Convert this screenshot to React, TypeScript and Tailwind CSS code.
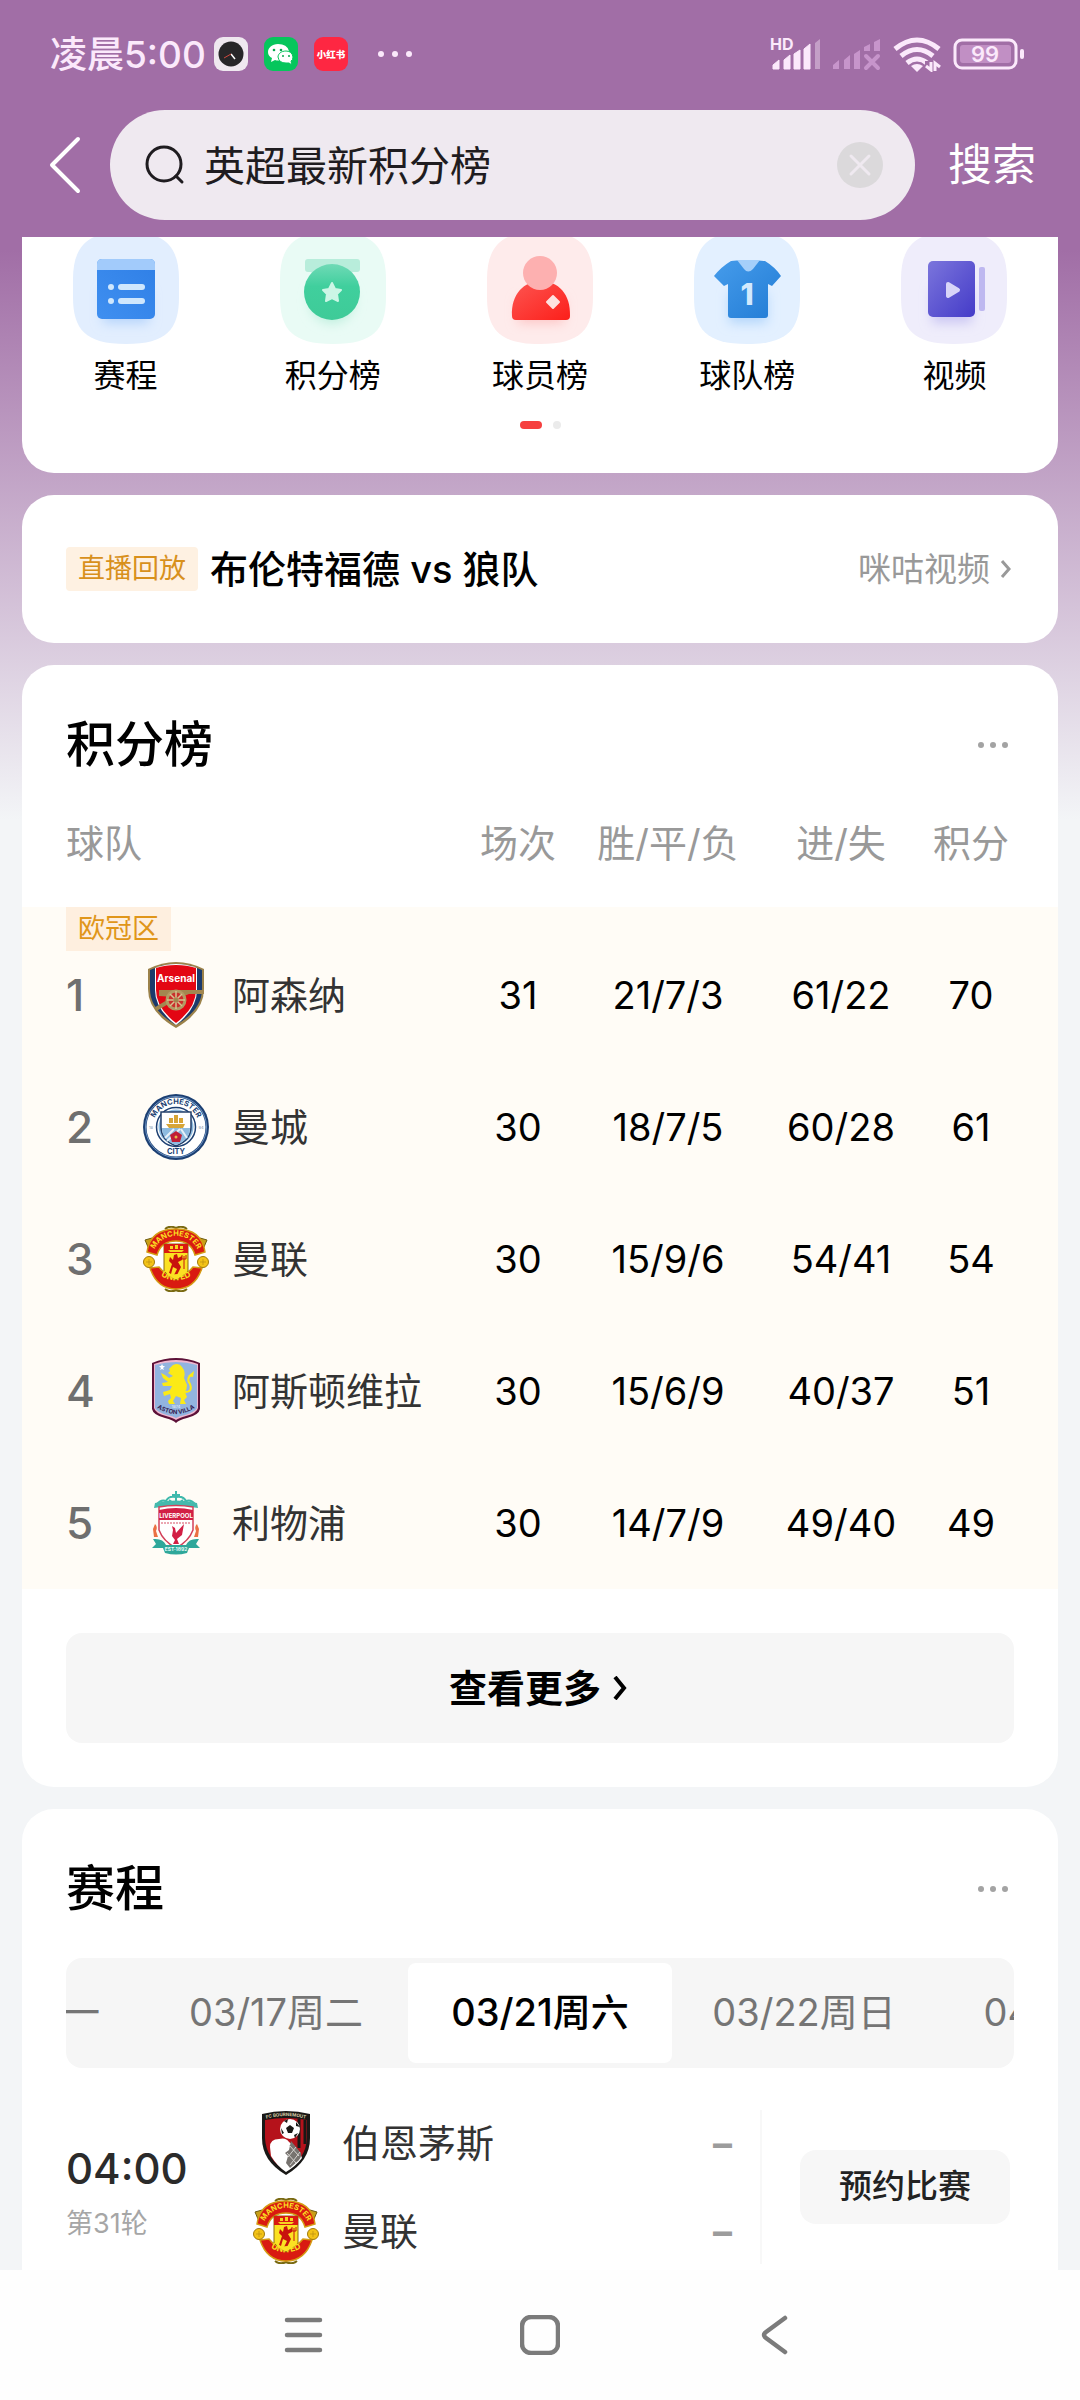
import type { ReactNode } from "react";

type CrestId = "arsenal" | "mancity" | "manutd" | "villa" | "liverpool" | "bournemouth";

interface Standing {
  rank: number;
  crest: CrestId;
  name: string;
  played: number;
  record: string;
  goals: string;
  points: number;
}

const STANDINGS: Standing[] = [
  { rank: 1, crest: "arsenal", name: "阿森纳", played: 31, record: "21/7/3", goals: "61/22", points: 70 },
  { rank: 2, crest: "mancity", name: "曼城", played: 30, record: "18/7/5", goals: "60/28", points: 61 },
  { rank: 3, crest: "manutd", name: "曼联", played: 30, record: "15/9/6", goals: "54/41", points: 54 },
  { rank: 4, crest: "villa", name: "阿斯顿维拉", played: 30, record: "15/6/9", goals: "40/37", points: 51 },
  { rank: 5, crest: "liverpool", name: "利物浦", played: 30, record: "14/7/9", goals: "49/40", points: 49 },
];

const DATES = ["03/16周一", "03/17周二", "03/21周六", "03/22周日", "04/11周六"];
const ACTIVE_DATE = "03/21周六";

const MATCH_TEAMS: { crest: CrestId; name: string }[] = [
  { crest: "bournemouth", name: "伯恩茅斯" },
  { crest: "manutd", name: "曼联" },
];

function ArsenalCrest() {
  return (
    <>
      <path d="M5 7Q19 0 33 0T61 7V27Q61 50 33 66Q5 50 5 27Z" fill="#9c824a" />
      <path d="M7 8Q20 2 33 2T59 8V27Q59 48 33 63Q7 48 7 27Z" fill="#1b3a6b" />
      <path d="M12 6Q22 2 33 2T54 6V28Q54 47 33 63Q12 47 12 28Z" fill="#fff" />
      <path d="M13 6Q22 3 33 3T53 6V28Q53 46 33 61Q13 46 13 28Z" fill="#e30613" />
      <text x="33" y="20" textAnchor="middle" fontSize="10" fontWeight="700" fill="#fff">
        Arsenal
      </text>
      <path d="M16 28H61V32H46Q40 35 32 35L16 34Z" fill="#a38750" />
      <path d="M28 38L13 47" stroke="#a38750" strokeWidth="4" />
      <circle cx="33" cy="38" r="9" fill="#c9302c" stroke="#b39a63" strokeWidth="3" />
      <path d="M33 29V47M24 38H42M27 32L39 44M39 32L27 44" stroke="#d5c390" strokeWidth="1.5" />
      <circle cx="33" cy="38" r="2.5" fill="#a38750" />
    </>
  );
}

function ManCityCrest() {
  return (
    <>
      <defs>
        <path id="city-top" d="M10 33A23 23 0 0 1 56 33" />
      </defs>
      <circle cx="33" cy="33" r="33" fill="#1c3f72" />
      <circle cx="33" cy="33" r="30.5" fill="none" stroke="#6c93c4" strokeWidth="1" />
      <circle cx="33" cy="33" r="29.5" fill="#fff" />
      <circle cx="33" cy="33" r="19.5" fill="#fff" stroke="#1c3f72" strokeWidth="1.5" />
      <circle cx="33" cy="33" r="17.5" fill="#8dbbe0" />
      <path d="M18 18H48V33Q48 46 33 52Q18 46 18 33Z" fill="#fff" stroke="#24406b" strokeWidth="1.5" />
      <path d="M19 34H47Q47 46 33 51Q19 46 19 34Z" fill="#8dbbe0" />
      <path d="M22 44L31 35M24 47L37 35M44 44L38 35" stroke="#e7f1f8" strokeWidth="2" />
      <path d="M23 30H42L40 34H26ZM26 29V24H30V29ZM31 29V21H35V29ZM36 29V24H40V29Z" fill="#d7a536" />
      <path d="M33 37L39 41L37 48H29L27 41Z" fill="#c01f36" />
      <circle cx="33" cy="43" r="1.5" fill="#e8b84a" />
      <text fontSize="7.5" fontWeight="700" fill="#1c3f72">
        <textPath href="#city-top" startOffset="50%" textAnchor="middle">MANCHESTER</textPath>
      </text>
      <text x="33" y="60" textAnchor="middle" fontSize="7.5" fontWeight="700" fill="#1c3f72">CITY</text>
      <text x="8" y="35" textAnchor="middle" fontSize="4" fill="#7a8ea9">18</text>
      <text x="58" y="35" textAnchor="middle" fontSize="4" fill="#7a8ea9">94</text>
    </>
  );
}

function ManUtdCrest({ id }: { id: string }) {
  return (
    <>
      <defs>
        <path id={`${id}-top`} d="M10 27A24 24 0 0 1 56 27" />
        <path id={`${id}-low`} d="M10 43A29 29 0 0 0 56 43" />
      </defs>
      <path d="M22 3Q27 -1 33 2Q39 -1 44 3M22 63Q27 67 33 64Q39 67 44 63" fill="none" stroke="#7a6a12" strokeWidth="2" />
      <path d="M2 14L9 12L14 20L5 21ZM64 14L57 12L52 20L61 21Z" fill="#c7a019" stroke="#6d5b10" />
      <circle cx="33" cy="33" r="27" fill="#fff" />
      <path d="M4 26Q7 3 33 3T62 26L52 29Q48 15 33 15T14 29Z" fill="#d91a11" stroke="#d59a12" strokeWidth="1.5" />
      <path d="M7 42L16 41Q23 50 33 50T50 41L59 42Q52 63 33 63T7 42Z" fill="#d91a11" stroke="#d59a12" strokeWidth="1.5" />
      <circle cx="6" cy="36" r="5.5" fill="#f3c316" stroke="#a17a0d" />
      <circle cx="60" cy="36" r="5.5" fill="#f3c316" stroke="#a17a0d" />
      <path d="M3 36H9M6 33V39M57 36H63M60 33V39" stroke="#b98d12" strokeWidth=".7" />
      <path d="M21 18H45V45Q40 51 33 54Q26 51 21 45Z" fill="#fbe122" stroke="#8c6a10" />
      <path d="M21 18H45V27H21Z" fill="#d91a11" />
      <path d="M25 24H41L39 26H27ZM27 23V20H30V23ZM32 23V19H35V23ZM37 23V20H40V23Z" fill="#f8d320" />
      <path
        d="M31 29L34 28L35 32L39 30V34L35 36L38 41L34 49H31L34 43L30 41L28 48L26 47L29 38L26 35L27 31L30 34Z"
        fill="#c8130d"
      />
      <path d="M41 30V43M39 29V33H43V29" fill="none" stroke="#c8130d" />
      <text fontSize="7.5" fontWeight="700" fill="#fbe122">
        <textPath href={`#${id}-top`} startOffset="50%" textAnchor="middle">MANCHESTER</textPath>
      </text>
      <text fontSize="8.5" fontWeight="700" fill="#fbe122">
        <textPath href={`#${id}-low`} startOffset="50%" textAnchor="middle">UNITED</textPath>
      </text>
    </>
  );
}

function VillaCrest() {
  return (
    <>
      <path d="M9 5Q21 0 33 0T57 5V51Q56 57 44 60Q36 62 33 65Q30 62 22 60Q10 57 9 51Z" fill="#5d1138" />
      <path d="M11 6Q22 2 33 2T55 6V50Q54 55 43 58Q36 60 33 62Q30 60 23 58Q12 55 11 50Z" fill="#efb7cf" />
      <path d="M12 7Q22 4 33 4T54 7V50Q52 54 42 57Q36 58 33 60Q30 58 24 57Q14 54 12 50Z" fill="#92b4df" />
      <path d="M19 6L20 8L22 8L20 10L21 12L19 11L17 12L18 10L16 8L18 8Z" fill="#fff" />
      <path
        d="M30 7Q36 4 39 9Q43 14 41 20L44 27Q44 31 42 34L44 39L41 42L43 46H37L38 40L33 38L30 43L32 46H26L25 43L28 40L27 36L21 38L20 34L27 32L29 28L20 28L19 25L25 24L20 20L18 15L22 17L26 20L30 18L25 15L27 13L26 11Z"
        fill="#fbea16"
      />
      <path d="M42 34Q50 34 47 26Q43 21 48 17" fill="none" stroke="#fbea16" strokeWidth="2" />
      <path d="M45 18L51 13L50 19Z" fill="#fbea16" />
      <path id="villa-arc" d="M14 50Q33 62 52 50" fill="none" />
      <text fontSize="6" fontWeight="700" fill="#35204f">
        <textPath href="#villa-arc" startOffset="50%" textAnchor="middle">ASTON VILLA</textPath>
      </text>
      <text x="33" y="50" textAnchor="middle" fontSize="4" fill="#e8f1fb">1874</text>
    </>
  );
}

function LiverpoolCrest() {
  return (
    <>
      <path
        d="M33 1V13M29 5H37M22 14Q24 5 33 7Q42 5 44 14M14 14Q20 7 27 14M52 14Q46 7 39 14M26 10L33 15L40 10"
        fill="none"
        stroke="#3fb9ac"
        strokeWidth="2"
      />
      <path d="M12 13Q33 8 54 13L55 18Q33 14 11 18Z" fill="#45b9ad" />
      <path d="M16 17Q33 14 50 17V40Q46 51 33 58Q20 51 16 40Z" fill="#fff" stroke="#d3405a" strokeWidth="1.5" />
      <path d="M16 20Q33 16 50 20V30H16Z" fill="#d21f45" />
      <text x="33" y="28" textAnchor="middle" fontSize="6" fontWeight="700" fill="#fff">LIVERPOOL</text>
      <path d="M18 33H48" stroke="#e58a99" strokeWidth="1.5" strokeDasharray="2 1" />
      <path d="M29 36L32 38L33 43L41 34L39 45L34 49L36 54H30L32 50L29 46L30 40Z" fill="#d21f45" />
      <path d="M12 34Q15 37 13 41L15 47H11L10 39ZM54 34Q51 37 53 41L51 47H55L56 39Z" fill="#ea7043" />
      <path d="M10 49Q20 48 23 55H43Q46 48 56 49L53 54L57 58H46L44 63Q33 66 22 63L20 58H9L13 54Z" fill="#2fa79a" />
      <text x="33" y="61" textAnchor="middle" fontSize="5" fontWeight="700" fill="#e8fffb">EST·1892</text>
    </>
  );
}

function BournemouthCrest() {
  return (
    <>
      <path d="M9 4Q33 -2 57 4V28Q57 51 33 65Q9 51 9 28Z" fill="#191816" />
      <path d="M12 10Q33 6 54 10V28Q53 49 33 61Q13 49 12 28Z" fill="#b5121b" />
      <path d="M46 9V38M52 10V34" stroke="#191816" strokeWidth="3" />
      <path d="M17 37Q17 29 26 29Q33 27 36 32L41 36L47 43L49 48Q43 56 33 62Q24 56 18 46Z" fill="#fff" />
      <path d="M38 31L48 43Q49 47 45 51L37 58L33 53L35 46L32 43L36 40Z" fill="#77736f" />
      <path d="M36 35L46 46M34 43L43 53M47 42L37 55M43 37L35 47" stroke="#d6d3cf" strokeWidth="1" />
      <circle cx="37" cy="19" r="10" fill="#fff" />
      <path d="M37 15L41 18L39 23H35L33 18ZM31 11L35 9L34 13ZM43 12L47 17L43 16ZM45 23L42 28L41 25ZM28 18L31 23L29 24Z" fill="#191816" />
      <path id="cherries-arc" d="M12 9Q33 3 54 9" fill="none" />
      <text fontSize="4.5" fontWeight="700" fill="#d8cda8">
        <textPath href="#cherries-arc" startOffset="50%" textAnchor="middle">AFC BOURNEMOUTH</textPath>
      </text>
    </>
  );
}

function Crest({ id, scope }: { id: CrestId; scope: string }) {
  return (
    <svg viewBox="0 0 66 66" className="size-[66px] shrink-0" aria-hidden="true">
      {id === "arsenal" && <ArsenalCrest />}
      {id === "mancity" && <ManCityCrest />}
      {id === "manutd" && <ManUtdCrest id={scope} />}
      {id === "villa" && <VillaCrest />}
      {id === "liverpool" && <LiverpoolCrest />}
      {id === "bournemouth" && <BournemouthCrest />}
    </svg>
  );
}

function Tile({ fill, children }: { fill: string; children: ReactNode }) {
  return (
    <svg viewBox="0 0 108 107" className="h-[107px] w-[108px]" aria-hidden="true">
      <path
        d="M22 0H86C100 6 107 20 107 42V60C107 92 95 107 54 107C13 107 1 92 1 60V42C1 20 8 6 22 0Z"
        fill={fill}
      />
      {children}
    </svg>
  );
}

const SHORTCUTS: { label: string; icon: ReactNode }[] = [
  {
    label: "赛程",
    icon: (
      <Tile fill="#e2eefe">
        <defs>
          <linearGradient id="sc-blue" x1="0" y1="1" x2="1" y2="0">
            <stop offset="0" stopColor="#3f8ff0" />
            <stop offset="1" stopColor="#2f7fe6" />
          </linearGradient>
          <filter id="sc-soft" x="-50%" y="-50%" width="200%" height="200%">
            <feGaussianBlur stdDeviation="6" />
          </filter>
        </defs>
        <rect x="31" y="54" width="46" height="32" fill="#b4d3fb" filter="url(#sc-soft)" />
        <rect x="25" y="22" width="58" height="60" rx="5" fill="url(#sc-blue)" />
        <path d="M25 33V27Q25 22 30 22H78Q83 22 83 27V33Z" fill="#a2cbfb" />
        <g fill="#cfe7fd">
          <circle cx="39" cy="50" r="3" />
          <rect x="46" y="47" width="27" height="6" rx="3" />
          <circle cx="39" cy="64" r="3" />
          <rect x="46" y="61" width="27" height="6" rx="3" />
        </g>
      </Tile>
    ),
  },
  {
    label: "积分榜",
    icon: (
      <Tile fill="#e9fbf5">
        <defs>
          <linearGradient id="sc-green" x1="0" y1="0" x2="0" y2="1">
            <stop offset="0" stopColor="#6fdab6" />
            <stop offset=".4" stopColor="#40cf9d" />
            <stop offset="1" stopColor="#3ecb98" />
          </linearGradient>
        </defs>
        <circle cx="53" cy="64" r="22" fill="#bceedc" filter="url(#sc-soft)" />
        <rect x="26" y="22" width="55" height="13" rx="3" fill="#b8eddb" />
        <circle cx="53" cy="55" r="28" fill="url(#sc-green)" />
        <path
          d="M53 46L56 52L62 53L58 57L59 64L53 61L47 64L48 57L44 53L50 52Z"
          fill="#ccf6e6"
          stroke="#ccf6e6"
          strokeWidth="2"
          strokeLinejoin="round"
        />
      </Tile>
    ),
  },
  {
    label: "球员榜",
    icon: (
      <Tile fill="#feebeb">
        <defs>
          <linearGradient id="sc-red" x1="0" y1="0" x2="1" y2="1">
            <stop offset="0" stopColor="#fd5652" />
            <stop offset="1" stopColor="#fc1f1a" />
          </linearGradient>
        </defs>
        <rect x="32" y="62" width="46" height="24" fill="#fdc4c4" filter="url(#sc-soft)" />
        <path d="M26 79C25 57 38 44 55 44S85 57 84 79Q84 83 80 83H30Q26 83 26 79Z" fill="url(#sc-red)" />
        <circle cx="54" cy="36" r="17" fill="#fdb0b0" />
        <path d="M67 59L73 65L67 71L61 65Z" fill="#fee2e0" stroke="#fee2e0" strokeWidth="2" strokeLinejoin="round" />
      </Tile>
    ),
  },
  {
    label: "球队榜",
    icon: (
      <Tile fill="#e3f0ff">
        <defs>
          <linearGradient id="sc-shirt" x1="0" y1="0" x2="1" y2="1">
            <stop offset="0" stopColor="#469ceb" />
            <stop offset="1" stopColor="#227cd5" />
          </linearGradient>
        </defs>
        <rect x="36" y="56" width="38" height="30" fill="#b2d6fb" filter="url(#sc-soft)" />
        <path
          d="M38 24Q54 22 72 24Q82 30 88 39L79 49L75 47V78Q75 81 72 81H38Q35 81 35 78V47L31 49L21 39Q28 30 38 24Z"
          fill="url(#sc-shirt)"
        />
        <path d="M44 23H67L60 32Q55 37 51 32Z" fill="#a5cffa" />
        <text x="54" y="68" textAnchor="middle" fontSize="30" fontWeight="800" fill="#d3e9fd">1</text>
      </Tile>
    ),
  },
  {
    label: "视频",
    icon: (
      <Tile fill="#efedfb">
        <defs>
          <linearGradient id="sc-purple" x1="0" y1="0" x2="1" y2="1">
            <stop offset="0" stopColor="#7b75dc" />
            <stop offset="1" stopColor="#443bc8" />
          </linearGradient>
        </defs>
        <rect x="32" y="52" width="40" height="34" fill="#cac6f3" filter="url(#sc-soft)" />
        <rect x="28" y="24" width="47" height="56" rx="5" fill="url(#sc-purple)" />
        <rect x="79" y="30" width="6" height="44" rx="2" fill="#beb8f0" />
        <path d="M48 47L58 53L48 59Z" fill="#d8d5f8" stroke="#d8d5f8" strokeWidth="4" strokeLinejoin="round" />
      </Tile>
    ),
  },
];

function StatusBar() {
  return (
    <div className="flex h-27 items-center justify-between pr-14 pl-[50px] text-[#fbe9fb]">
      <div className="flex items-center">
        <span className="mr-2 text-[37px] leading-none font-medium">凌晨5:00</span>
        <svg viewBox="0 0 200 34" className="h-[34px] w-[200px]" aria-hidden="true">
          <rect width="34" height="34" rx="9" fill="#efe8ef" />
          <circle cx="17" cy="17" r="12.5" fill="#272628" />
          <path d="M17 17L21 22" stroke="#fff" strokeWidth="1.5" />
          <path d="M17 17L10 21" stroke="#d0493f" strokeWidth="1" />
          <rect x="50" width="34" height="34" rx="9" fill="#06c65c" />
          <path d="M64 7C58 7 54 11 54 15Q54 19 58 21L57 25L61 23Q64 24 67 23Q66 15 75 14Q73 7 64 7Z" fill="#fff" />
          <path d="M72 14C67 14 64 17 64 20Q65 26 72 26L75 26L78 28L77 24Q79 23 79 20Q78 14 72 14Z" fill="#fff" stroke="#06c65c" strokeWidth="1" />
          <g fill="#06a84e">
            <circle cx="60" cy="13" r="1.3" />
            <circle cx="67" cy="13" r="1.3" />
            <circle cx="69" cy="19" r="1" />
            <circle cx="75" cy="19" r="1" />
          </g>
          <rect x="100" width="34" height="34" rx="9" fill="#fe2742" />
          <text x="117" y="21" textAnchor="middle" fontSize="9.5" fontWeight="800" fill="#fff">小红书</text>
          <g fill="#fbe9fb">
            <circle cx="167" cy="17" r="3" />
            <circle cx="181" cy="17" r="3" />
            <circle cx="195" cy="17" r="3" />
          </g>
        </svg>
      </div>
      <svg viewBox="0 0 254 36" className="h-9 w-[254px]" aria-hidden="true">
        <text x="0" y="14" fontSize="16" fontWeight="700" fill="currentColor">HD</text>
        <g fill="currentColor">
          <path d="M3 33V29L9 24V33ZM14 33V24L20 19V33ZM24 33V18L30 14V33ZM34 33V13L40 8V33Z" stroke="currentColor" strokeLinejoin="round" />
          <path d="M45 33V7L50 3V33Z" opacity=".4" />
        </g>
        <g fill="#c795cb">
          <path d="M63 33V29L69 24V33ZM74 33V24L80 19V33ZM84 33V18L90 14V33Z" />
          <path d="M94 15V11L100 8V15ZM104 15V6L110 3V15Z" />
          <path d="M96 20L108 32M108 20L96 32" stroke="#c795cb" strokeWidth="4" strokeLinecap="round" />
        </g>
        <g fill="none" stroke="currentColor" strokeWidth="5">
          <path d="M125 13Q147 -5 169 13" />
          <path d="M131 20Q147 7 163 20" />
          <path d="M137 27Q147 19 157 27" />
        </g>
        <path d="M141 30Q147 26 153 30L147 36Z" fill="currentColor" />
        <path d="M155 25H172V36H155Z" fill="#a16ea6" />
        <path d="M161 26V34L156 30M165 35V27L170 31" fill="none" stroke="currentColor" strokeWidth="3" />
        <rect x="185" y="4" width="61" height="28" rx="7" fill="none" stroke="currentColor" strokeWidth="3" />
        <rect x="190" y="9" width="51" height="18" rx="3" fill="#c18fc4" />
        <rect x="250" y="13" width="4" height="10" rx="2" fill="currentColor" />
        <text x="215" y="26" textAnchor="middle" fontSize="22" fontWeight="600" fill="currentColor">99</text>
      </svg>
    </div>
  );
}

function MoreDots() {
  return (
    <button type="button" aria-label="更多" className="flex h-12 items-center gap-1.5 pr-1.5">
      <span className="size-1.5 rounded-full bg-[#a3a3a3]" />
      <span className="size-1.5 rounded-full bg-[#a3a3a3]" />
      <span className="size-1.5 rounded-full bg-[#a3a3a3]" />
    </button>
  );
}

function SearchHeader() {
  return (
    <form className="flex items-center pt-0.5 pr-11 pb-[17px]" onSubmit={(event) => event.preventDefault()}>
      <button type="button" aria-label="返回" className="flex w-[110px] shrink-0 justify-start pl-12">
        <svg viewBox="0 0 34 58" className="h-[58px] w-[34px]" fill="none" stroke="#fff" strokeWidth="4" strokeLinecap="round" strokeLinejoin="round">
          <path d="M30 3L4 29L30 55" />
        </svg>
      </button>
      <div className="flex h-[110px] min-w-0 flex-1 items-center rounded-full bg-[#efe9f0] pr-8 pl-[34px]">
        <svg viewBox="0 0 42 42" className="size-[42px] shrink-0" fill="none" stroke="#1f1c20" strokeWidth="3" strokeLinecap="round" aria-hidden="true">
          <circle cx="20" cy="20" r="17" />
          <path d="M32 32L38 38" />
        </svg>
        <input
          aria-label="搜索内容"
          defaultValue="英超最新积分榜"
          className="ml-[18px] h-16 min-w-0 flex-1 bg-transparent pb-1 text-[41px] text-[#1f1c20] outline-none"
        />
        <button type="button" aria-label="清除" className="shrink-0">
          <svg viewBox="0 0 46 46" className="size-[46px]">
            <circle cx="23" cy="23" r="23" fill="#dbd9db" />
            <path d="M14 14L32 32M32 14L14 32" stroke="#efe9f0" strokeWidth="3" strokeLinecap="round" />
          </svg>
        </button>
      </div>
      <button type="submit" className="ml-[33px] shrink-0 text-[44px] leading-none text-white">
        搜索
      </button>
    </form>
  );
}

function ShortcutCard() {
  return (
    <section className="rounded-b-[32px] bg-white pb-11">
      <nav className="grid grid-cols-5">
        {SHORTCUTS.map((item) => (
          <a key={item.label} href="#" className="flex flex-col items-center">
            {item.icon}
            <span className="mt-3 text-[32px] leading-10 text-black">{item.label}</span>
          </a>
        ))}
      </nav>
      <div className="mt-[25px] flex justify-center gap-[11px]">
        <span className="h-2 w-[22px] rounded-full bg-[#f6403f]" />
        <span className="size-2 rounded-full bg-[#ebebeb]" />
      </div>
    </section>
  );
}

function ReplayCard() {
  return (
    <a href="#" className="flex h-[148px] items-center rounded-[32px] bg-white px-11">
      <span className="rounded-sm bg-[#fef1e2] px-3 text-[27px] leading-11 text-[#d8901c]">直播回放</span>
      <span className="ml-3 text-[38px] leading-none font-medium text-black">布伦特福德 vs 狼队</span>
      <span className="ml-auto text-[33px] leading-none text-[#999]">咪咕视频</span>
      <svg viewBox="0 0 12 20" className="mr-0.5 ml-2.5 h-5 w-3" fill="none" stroke="#999" strokeWidth="3" aria-hidden="true">
        <path d="M2 2L9 10L2 18" />
      </svg>
    </a>
  );
}

function StandingsCard() {
  return (
    <section className="rounded-[32px] bg-white pb-11">
      <div className="flex items-center justify-between px-11 pt-[50px]">
        <h2 className="text-[49px] leading-[60px] font-medium text-black">积分榜</h2>
        <MoreDots />
      </div>
      <table className="mt-1 w-full table-fixed border-collapse">
        <colgroup>
          <col className="w-[121px]" />
          <col />
          <col className="w-[110px]" />
          <col className="w-[190px]" />
          <col className="w-[156px]" />
          <col className="w-[139px]" />
        </colgroup>
        <thead>
          <tr className="h-32 text-[38px] text-[#999]">
            <th colSpan={2} className="p-0 pl-11 text-left font-normal">球队</th>
            <th className="p-0 font-normal">场次</th>
            <th className="p-0 font-normal">胜/平/负</th>
            <th className="p-0 font-normal">进/失</th>
            <th className="p-0 pr-[35px] font-normal">积分</th>
          </tr>
        </thead>
        <tbody className="bg-[#fffcf6]">
          <tr>
            <td colSpan={6} className="h-[22px] p-0">
              {/* zone label hangs over the first row */}
              <div className="relative h-[22px]">
                <span className="absolute top-0 left-11 bg-[#feefdf] px-3 text-[27px] leading-11 text-[#e0961a]">
                  欧冠区
                </span>
              </div>
            </td>
          </tr>
          {STANDINGS.map((team) => (
            <tr key={team.rank} className="h-33 text-center text-[38px] text-black">
              <td className="p-0 pl-11 text-left text-[44px] font-medium text-[#6f6f6f]">{team.rank}</td>
              <td className="p-0 text-left">
                <div className="flex items-center gap-[23px] whitespace-nowrap text-[#333]">
                  <Crest id={team.crest} scope={`table-${team.crest}`} />
                  {team.name}
                </div>
              </td>
              <td className="p-0">{team.played}</td>
              <td className="p-0">{team.record}</td>
              <td className="p-0">{team.goals}</td>
              <td className="p-0 pr-[35px]">{team.points}</td>
            </tr>
          ))}
        </tbody>
      </table>
      <div className="px-11 pt-11">
        <button type="button" className="flex h-[110px] w-full items-center justify-center gap-3 rounded-2xl bg-[#f6f6f6] pr-1 text-[38px] font-bold text-black">
          查看更多
          <svg viewBox="0 0 14 24" className="h-6 w-3.5" fill="none" stroke="currentColor" strokeWidth="4" aria-hidden="true">
            <path d="M2 1L11 12L2 23" />
          </svg>
        </button>
      </div>
    </section>
  );
}

function ScheduleCard() {
  return (
    <section className="rounded-t-[32px] bg-white px-11 pb-1.5">
      <div className="flex items-center justify-between pt-[50px]">
        <h2 className="text-[49px] leading-[60px] font-medium text-black">赛程</h2>
        <MoreDots />
      </div>
      <div className="mt-[39px] flex justify-center overflow-hidden rounded-2xl bg-[#f6f6f6] py-[5px]">
        {DATES.map((date) => (
          <button
            key={date}
            type="button"
            className={`h-25 w-[264px] shrink-0 rounded-lg pb-0.5 text-[38px] whitespace-nowrap ${
              date === ACTIVE_DATE ? "bg-white font-medium text-black" : "text-[#757575]"
            }`}
          >
            {date}
          </button>
        ))}
      </div>
      <div className="mt-[42px] flex items-center">
        <div className="w-[187px] shrink-0 pt-3">
          <div className="text-[42px] leading-[50px] font-medium text-[#2b2b2b]">04:00</div>
          <div className="mt-3 text-[27px] leading-9 text-[#a6a6a6]">第31轮</div>
        </div>
        <div className="flex min-w-0 flex-1 flex-col gap-[22px] border-r-2 border-[#f8f8f8] pr-7">
          {MATCH_TEAMS.map((team) => (
            <div key={team.name} className="flex items-center gap-[23px] text-[38px] leading-[60px] text-[#333]">
              <Crest id={team.crest} scope={`match-${team.crest}`} />
              <span className="flex-1">{team.name}</span>
              <span className="font-bold text-[#9c9c9c]">–</span>
            </div>
          ))}
        </div>
        <button type="button" className="mr-1 ml-[38px] h-[74px] w-[210px] shrink-0 rounded-2xl bg-[#f7f7f7] text-[33px] font-medium text-[#222]">
          预约比赛
        </button>
      </div>
    </section>
  );
}

function SystemNav() {
  return (
    <nav className="flex h-[130px] items-center justify-center gap-[196px] bg-[#fefefe] text-[#7b7b7b]">
      <button type="button" aria-label="最近任务">
        <svg viewBox="0 0 40 40" className="size-10" stroke="currentColor" strokeWidth="4.5" strokeLinecap="round">
          <path d="M3 5H36M3 20H36M3 35H36" />
        </svg>
      </button>
      <button type="button" aria-label="主页">
        <svg viewBox="0 0 40 40" className="size-10" fill="none" stroke="currentColor" strokeWidth="4.5">
          <rect x="2" y="2" width="36" height="36" rx="9" />
        </svg>
      </button>
      <button type="button" aria-label="返回上一页">
        <svg viewBox="0 0 40 40" className="size-10" fill="none" stroke="currentColor" strokeWidth="4.5" strokeLinecap="round">
          <path d="M29 3L10 17Q6 20 10 23L29 37" />
        </svg>
      </button>
    </nav>
  );
}

export default function App() {
  return (
    <div className="flex min-h-screen flex-col bg-[linear-gradient(#a16ea6_250px,#f3f5f7_820px)] font-[Inter,'Noto_Sans_CJK_SC',sans-serif]">
      <header>
        <StatusBar />
        <SearchHeader />
      </header>
      <main className="flex flex-1 flex-col gap-[22px] px-[22px]">
        <ShortcutCard />
        <ReplayCard />
        <StandingsCard />
        <ScheduleCard />
      </main>
      <SystemNav />
    </div>
  );
}
